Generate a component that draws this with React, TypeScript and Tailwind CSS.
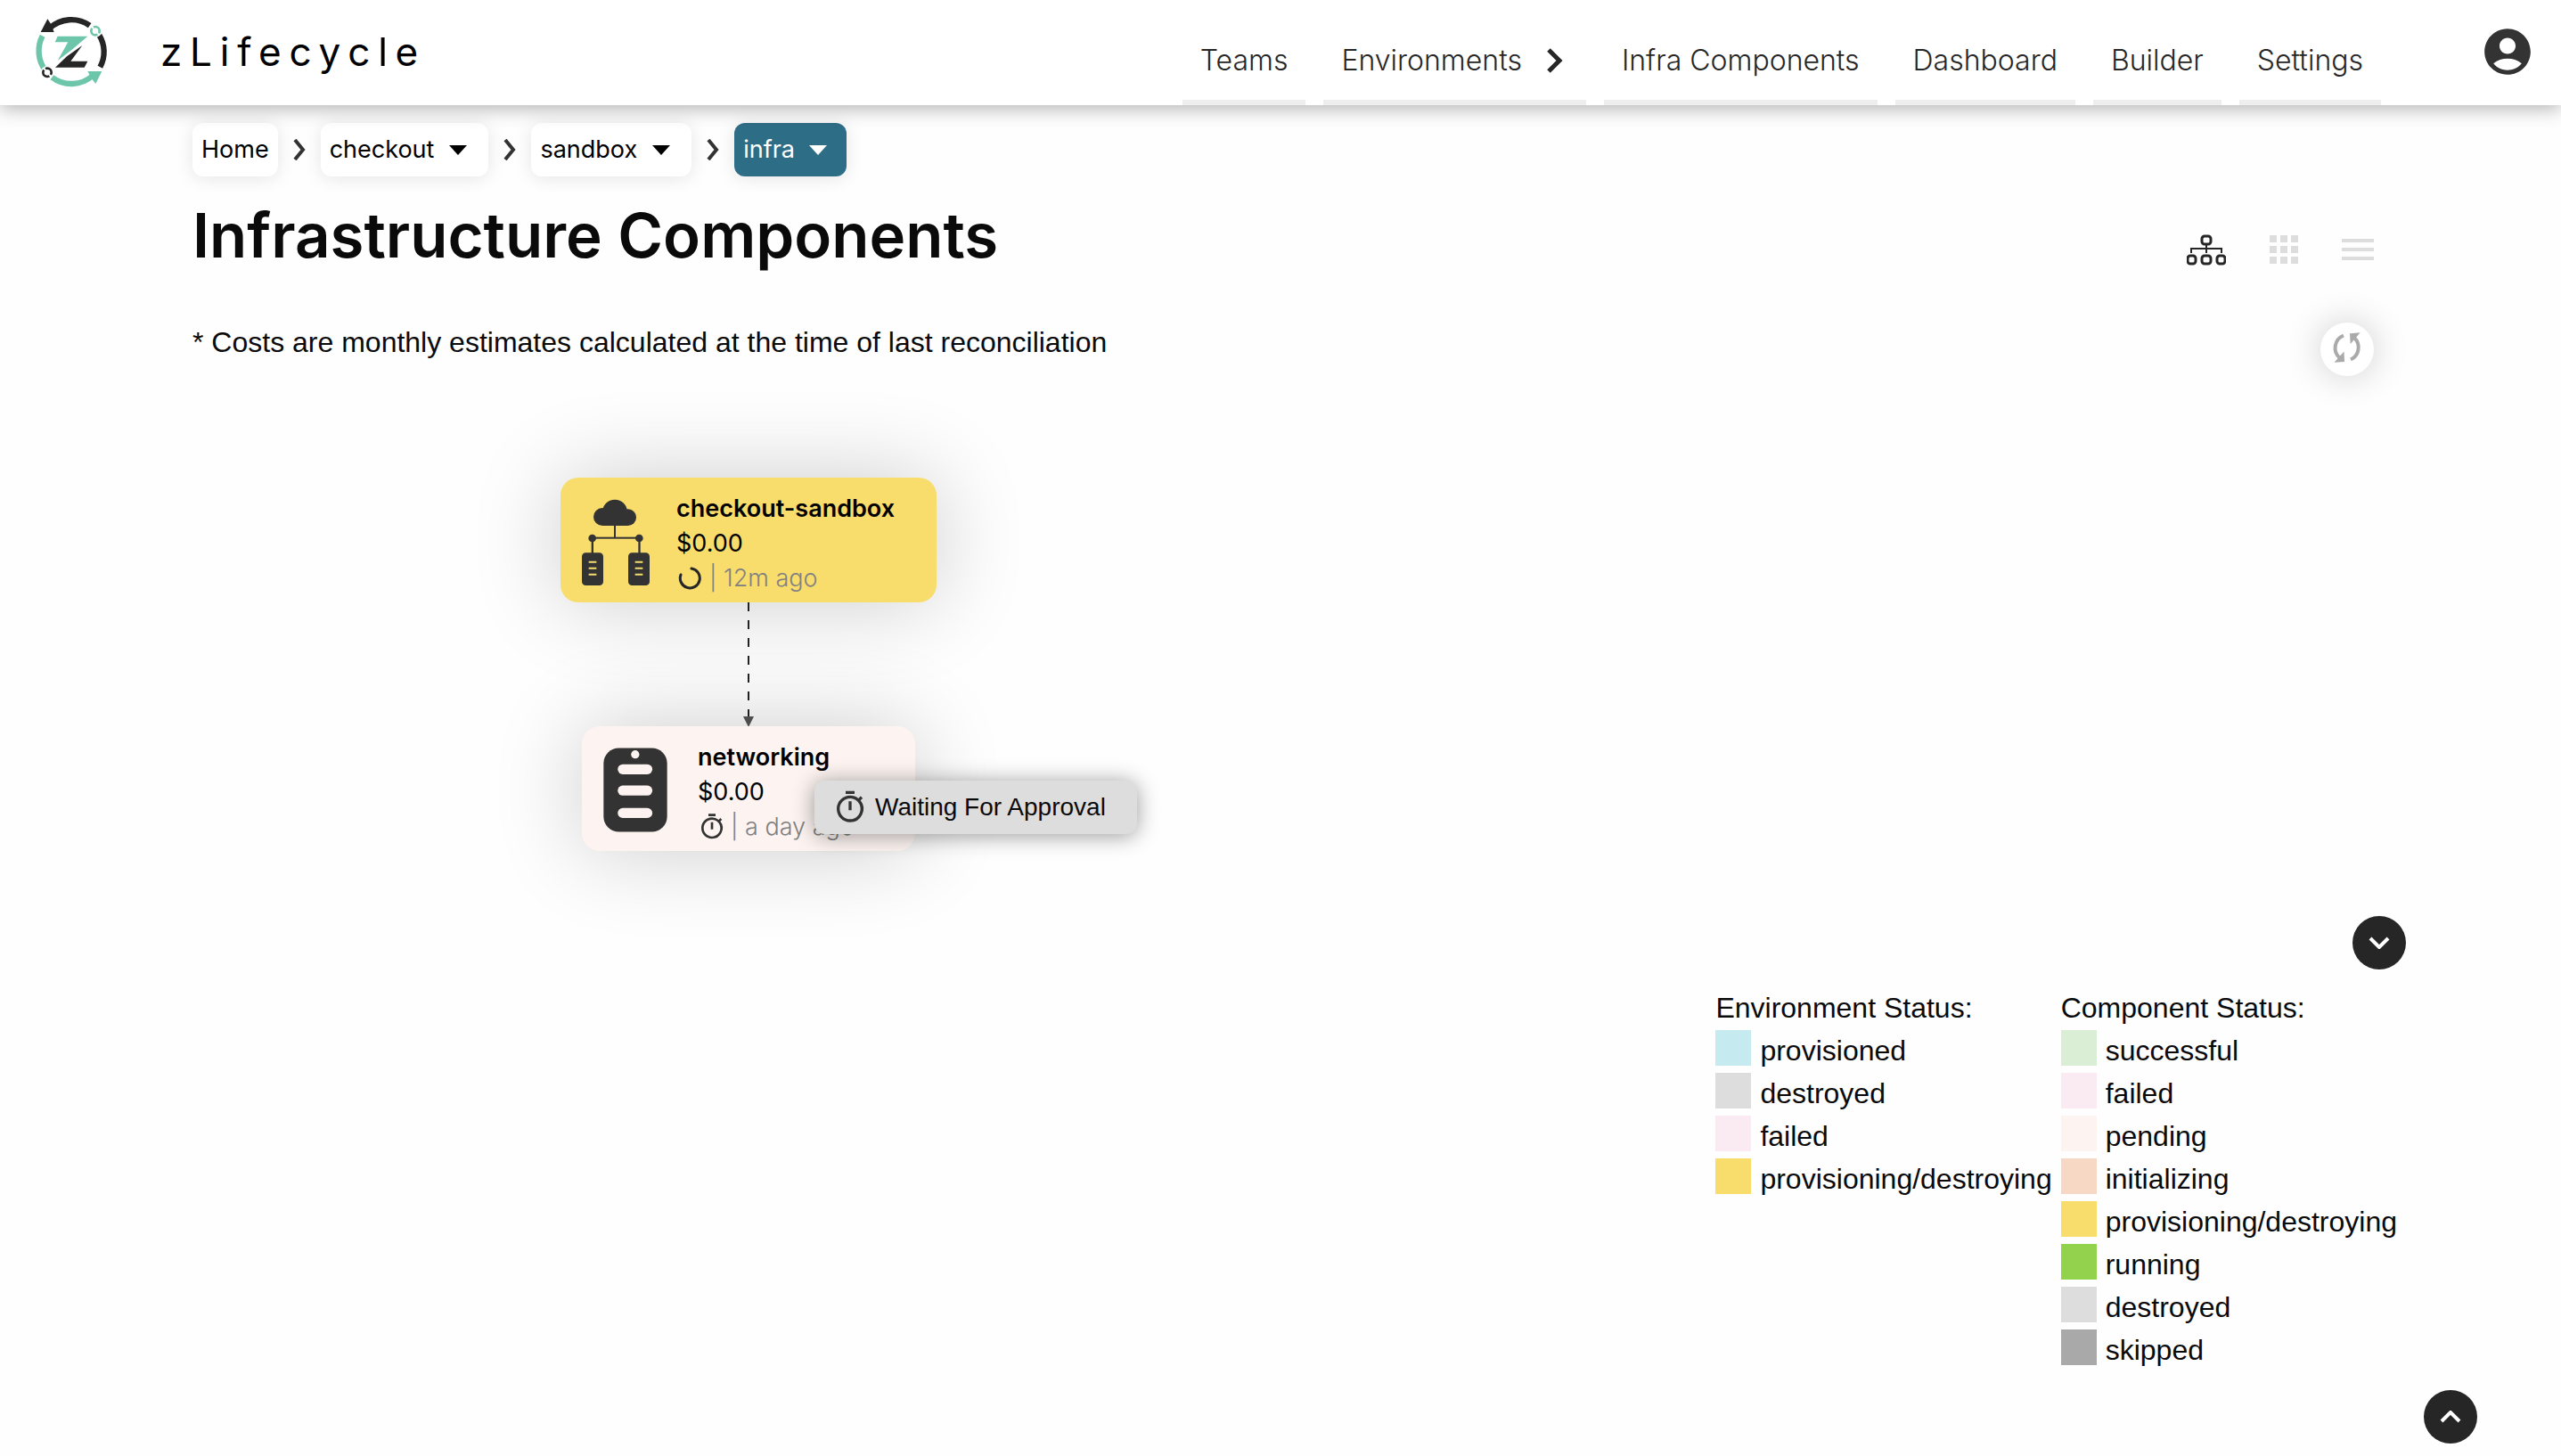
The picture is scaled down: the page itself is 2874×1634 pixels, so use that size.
import React from "react";
import { MdAccountCircle } from "react-icons/md";

const TIMER_PATH =
  "M15 1H9v2h6V1zm-4 13h2V8h-2v6zm8.03-6.61l1.42-1.42c-.43-.51-.9-.99-1.41-1.41l-1.42 1.42A8.962 8.962 0 0 0 12 4c-4.97 0-9 4.03-9 9s4.02 9 9 9a8.994 8.994 0 0 0 7.03-14.61zM12 20c-3.87 0-7-3.13-7-7s3.13-7 7-7 7 3.13 7 7-3.13 7-7 7z";

function Logo() {
  return (
    <svg viewBox="0 0 300 300" className="size-[100px] shrink-0" aria-hidden="true">
      <g fill="none" strokeWidth="19">
        <path d="M76 72A108 108 0 0 1 212 62" stroke="#262626" />
        <path d="M244 94A108 108 0 0 1 247 202" stroke="#262626" />
        <path d="M53 97A109 109 0 0 0 62 212" stroke="#6dc6a9" />
        <path d="M85 236A108 108 0 0 0 222 231" stroke="#6dc6a9" />
      </g>
      <path d="M70 40L82 58L92 84H47Z" fill="#262626" />
      <path d="M205 216H253L232 258L218 240Z" fill="#6dc6a9" />
      <circle cx="231" cy="80" r="22" fill="#fff" />
      <circle cx="231" cy="80" r="14" fill="none" stroke="#6dc6a9" strokeWidth="8" strokeDasharray="38 6" strokeDashoffset="-14" />
      <circle cx="69" cy="220" r="22" fill="#fff" />
      <circle cx="69" cy="220" r="14" fill="none" stroke="#262626" strokeWidth="8" strokeDasharray="38 6" strokeDashoffset="-14" />
      <path d="M104 98H205L154 142L104 180L139 118H95Z" fill="#6dc6a9" />
      <path d="M187 129L148 182H205L194 203H96L135 166Z" fill="#262626" />
    </svg>
  );
}

function TimerIcon({ className }: { className: string }) {
  return (
    <svg viewBox="0 0 24 24" className={className} fill="#333" aria-hidden="true">
      <path d={TIMER_PATH} />
    </svg>
  );
}

function SpinnerIcon() {
  return (
    <svg viewBox="0 0 32 32" className="size-8 shrink-0" fill="none" stroke="#262626" strokeWidth="3" strokeLinecap="round" aria-hidden="true">
      <path d="M17 5A11 11 0 1 1 5 12" />
    </svg>
  );
}

function Caret() {
  return (
    <svg viewBox="0 0 20 11" className="h-[11px] w-5" aria-hidden="true">
      <path d="M0 0H20L10 11Z" fill="currentColor" />
    </svg>
  );
}

function CrumbSeparator() {
  return (
    <svg viewBox="0 0 14 24" className="mx-[17px] h-6 w-[14px]" fill="none" stroke="#333" strokeWidth="4" aria-hidden="true">
      <path d="M2 1L11 12L2 23" />
    </svg>
  );
}

function CloudIcon() {
  return (
    <svg viewBox="36 28 234 294" className="mt-6 h-[98px] w-[78px] shrink-0" fill="#333" aria-hidden="true">
      <circle cx="150" cy="72" r="42" />
      <circle cx="108" cy="88" r="30" />
      <circle cx="194" cy="90" r="28" />
      <rect x="108" y="84" width="86" height="34" />
      <rect x="147" y="116" width="6" height="44" />
      <rect x="74" y="156" width="158" height="6" />
      <circle cx="74" cy="160" r="13" />
      <circle cx="232" cy="160" r="13" />
      <rect x="71" y="160" width="7" height="52" />
      <rect x="229" y="160" width="7" height="52" />
      <rect x="39" y="209" width="72" height="110" rx="13" />
      <rect x="195" y="209" width="72" height="110" rx="13" />
      <path d="M62 240h26M62 261h26M62 282h26M218 240h26M218 261h26M218 282h26" stroke="#f8dd6d" strokeWidth="6" />
    </svg>
  );
}

function ComponentIcon() {
  return (
    <svg viewBox="51 27 217 286" className="mt-6 h-[95px] w-[72px] shrink-0" aria-hidden="true">
      <rect x="52" y="28" width="215" height="284" rx="52" fill="#333" />
      <g fill="#fdf4f1">
        <circle cx="159" cy="50" r="14" />
        <rect x="100" y="83" width="117" height="34" rx="17" />
        <rect x="100" y="155" width="117" height="34" rx="17" />
        <rect x="100" y="231" width="117" height="34" rx="17" />
      </g>
    </svg>
  );
}

const navItems = ["Teams", "Environments", "Infra Components", "Dashboard", "Builder", "Settings"];

const crumbs = ["checkout", "sandbox", "infra"];

const environmentStatus = [
  { label: "provisioned", color: "bg-[#c5ebf0]" },
  { label: "destroyed", color: "bg-[#dddddd]" },
  { label: "failed", color: "bg-[#faebf3]" },
  { label: "provisioning/destroying", color: "bg-[#f8dd6d]" },
];

const componentStatus = [
  { label: "successful", color: "bg-[#d9eed5]" },
  { label: "failed", color: "bg-[#faebf3]" },
  { label: "pending", color: "bg-[#fdf4f1]" },
  { label: "initializing", color: "bg-[#f7d8c4]" },
  { label: "provisioning/destroying", color: "bg-[#f8dd6d]" },
  { label: "running", color: "bg-[#93d24c]" },
  { label: "destroyed", color: "bg-[#dddddd]" },
  { label: "skipped", color: "bg-[#a9a9a9]" },
];

function Header() {
  return (
    <header className="relative z-10 flex h-[118px] items-start bg-white pr-[29px] pl-[30px] shadow-[0_4px_20px_rgba(0,0,0,0.3)]">
      <a href="#" className="flex items-center gap-[50px] pt-2">
        <Logo />
        <span className="text-[44px] leading-[60px] tracking-[0.2em] text-black">zLifecycle</span>
      </a>
      <nav className="ml-auto flex gap-5 self-end text-[32px] leading-[48px] text-[#262626]">
        {navItems.map((item) => (
          <a key={item} href="#" className="flex items-center border-b-6 border-[#eeeeee] px-5 pb-5 font-light">
            {item}
            {item === "Environments" && (
              <svg viewBox="0 0 20 28" className="mr-1 ml-7 h-7 w-5" fill="none" stroke="#262626" strokeWidth="5" aria-hidden="true">
                <path d="M2 2L14 14L2 26" />
              </svg>
            )}
          </a>
        ))}
      </nav>
      <button type="button" aria-label="Account" className="mt-[27px] ml-[111px]">
        <MdAccountCircle className="size-[62px] text-[#333]" />
      </button>
    </header>
  );
}

function Breadcrumb() {
  return (
    <nav aria-label="Breadcrumb" className="flex items-center text-[27px] leading-[40px] text-black">
      <a href="#" className="flex h-[60px] items-center rounded-xl bg-white px-[10px] shadow-[0_2px_20px_rgba(0,0,0,0.1)]">
        Home
      </a>
      {crumbs.map((crumb) => (
        <React.Fragment key={crumb}>
          <CrumbSeparator />
          <button
            type="button"
            aria-haspopup="menu"
            className={
              crumb === "infra"
                ? "flex h-[60px] items-center gap-4 rounded-xl bg-[#2e6d86] pr-[22px] pl-[10px] text-white shadow-[0_2px_20px_rgba(0,0,0,0.1)]"
                : "flex h-[60px] items-center gap-[17px] rounded-xl bg-white pr-6 pl-[10px] shadow-[0_2px_20px_rgba(0,0,0,0.1)]"
            }
          >
            {crumb}
            <Caret />
          </button>
        </React.Fragment>
      ))}
    </nav>
  );
}

function ViewSwitch() {
  return (
    <div className="flex items-center gap-[49px] pb-[6px]">
      <button type="button" aria-label="Tree view">
        <svg viewBox="0 0 44 36" className="h-9 w-11" fill="none" stroke="#262626" strokeWidth="3" aria-hidden="true">
          <rect x="17" y="3" width="10" height="9" rx="3" />
          <rect x="1" y="25" width="9" height="9" rx="3" />
          <rect x="17" y="25" width="10" height="9" rx="3" />
          <rect x="34" y="25" width="9" height="9" rx="3" />
          <path d="M22 12V22M5 22V17H39V22" strokeWidth="2" />
        </svg>
      </button>
      <button type="button" aria-label="Grid view">
        <svg viewBox="0 0 32 32" className="size-8" fill="#dddddd" aria-hidden="true">
          <path d="M0 0h8v8H0zM12 0h8v8h-8zM24 0h8v8h-8zM0 12h8v8H0zM12 12h8v8h-8zM24 12h8v8h-8zM0 24h8v8H0zM12 24h8v8h-8zM24 24h8v8h-8z" />
        </svg>
      </button>
      <button type="button" aria-label="List view">
        <svg viewBox="0 0 36 24" className="h-6 w-9" fill="#dddddd" aria-hidden="true">
          <path d="M0 0h36v4H0zM0 10h36v4H0zM0 20h36v4H0z" />
        </svg>
      </button>
    </div>
  );
}

function RefreshButton() {
  return (
    <button type="button" aria-label="Refresh" className="size-[60px] rounded-full bg-white shadow-[0_0_40px_rgba(0,0,0,0.2)]">
      <svg viewBox="0 0 60 60" className="size-[60px]" fill="none" stroke="#aaaaaa" strokeWidth="4" aria-hidden="true">
        <path d="M26 14.500A15 15 0 0 0 22 40" />
        <path d="M34 41.500A15 15 0 0 0 38 17" />
        <path d="M15.500 44.700L27 44L26.500 32.500Z" fill="#aaaaaa" stroke="none" />
        <path d="M44.700 11.300L33 12.300L33.700 24Z" fill="#aaaaaa" stroke="none" />
      </svg>
    </button>
  );
}

function Diagram() {
  return (
    <div className="mt-[114px] ml-[413px] flex w-fit flex-col items-center text-[27px] leading-[39px] text-black">
      <article className="flex h-[140px] w-[422px] gap-[29px] rounded-[20px] bg-[#f8dd6d] pl-[23px] shadow-[0_0_100px_rgba(0,0,0,0.2)]">
        <CloudIcon />
        <div className="pt-[15px]">
          <h2 className="font-semibold">checkout-sandbox</h2>
          <p>$0.00</p>
          <p className="flex items-center gap-[5px] font-light text-[#808080]">
            <SpinnerIcon />
            <span>| 12m ago</span>
          </p>
        </div>
      </article>
      <svg viewBox="0 0 14 139" className="relative h-[139px] w-[14px]" aria-hidden="true">
        <path d="M7 0V128" stroke="#222" strokeWidth="2" strokeDasharray="10 10" />
        <path d="M1 128H13L7 140Z" fill="#555" />
      </svg>
      <article className="relative flex h-[140px] w-[374px] gap-[34px] rounded-[20px] bg-[#fdf4f1] pl-6 shadow-[0_0_100px_rgba(0,0,0,0.2)]">
        <ComponentIcon />
        <div className="pt-[15px]">
          <h2 className="font-semibold">networking</h2>
          <p>$0.00</p>
          <p className="flex items-center gap-[5px] font-light text-[#808080]">
            <TimerIcon className="size-8 shrink-0" />
            <span>| a day ago</span>
          </p>
        </div>
        <div
          role="tooltip"
          className="absolute top-[61px] left-[261px] flex h-[60px] w-[362px] items-center gap-2 rounded-xl bg-[#dddddd] pl-5 font-['Liberation_Sans',Arial,sans-serif] text-[28px] leading-8 whitespace-nowrap text-[#0a0a0a] shadow-[0_2px_24px_rgba(0,0,0,0.4)]"
        >
          <TimerIcon className="size-10 shrink-0" />
          Waiting For Approval
        </div>
      </article>
    </div>
  );
}

function StatusList({ title, items }: { title: string; items: { label: string; color: string }[] }) {
  return (
    <section>
      <h3 className="mb-[7px]">{title}</h3>
      <ul>
        {items.map((item) => (
          <li key={item.label} className="flex h-12 gap-[10px]">
            <span className={`size-10 ${item.color}`} />
            <span className="pt-[5px]">{item.label}</span>
          </li>
        ))}
      </ul>
    </section>
  );
}

function RoundButton({ label, path }: { label: string; path: string }) {
  return (
    <button type="button" aria-label={label} className="flex size-[60px] items-center justify-center rounded-full bg-[#262626]">
      <svg viewBox="0 0 24 14" className="h-[14px] w-6" fill="none" stroke="#fff" strokeWidth="4" aria-hidden="true">
        <path d={path} />
      </svg>
    </button>
  );
}

export default function App() {
  return (
    <div className="min-h-screen bg-[#fefefe] font-['Inter',sans-serif] text-[#0a0a0a]">
      <Header />
      <main className="pt-5 pr-[210px] pl-[216px]">
        <Breadcrumb />
        <div className="mt-[26px] flex items-end justify-between">
          <h1 className="text-[69px] leading-[80px] font-semibold">Infrastructure Components</h1>
          <ViewSwitch />
        </div>
        <div className="mt-[58px] flex items-start justify-between font-['Liberation_Sans',Arial,sans-serif] text-[32px] leading-9">
          <p className="pt-1">* Costs are monthly estimates calculated at the time of last reconciliation</p>
          <RefreshButton />
        </div>
        <Diagram />
      </main>
      <aside className="mt-[73px] flex flex-col items-end gap-[25px] pr-[174px] font-['Liberation_Sans',Arial,sans-serif] text-[32px] leading-9">
        <RoundButton label="Hide legend" path="M2 2L12 12L22 2" />
        <div className="flex gap-[10px] pr-[10px]">
          <StatusList title="Environment Status:" items={environmentStatus} />
          <StatusList title="Component Status:" items={componentStatus} />
        </div>
      </aside>
      <div className="fixed right-[94px] bottom-[14px]">
        <RoundButton label="Back to top" path="M2 12L12 2L22 12" />
      </div>
    </div>
  );
}
